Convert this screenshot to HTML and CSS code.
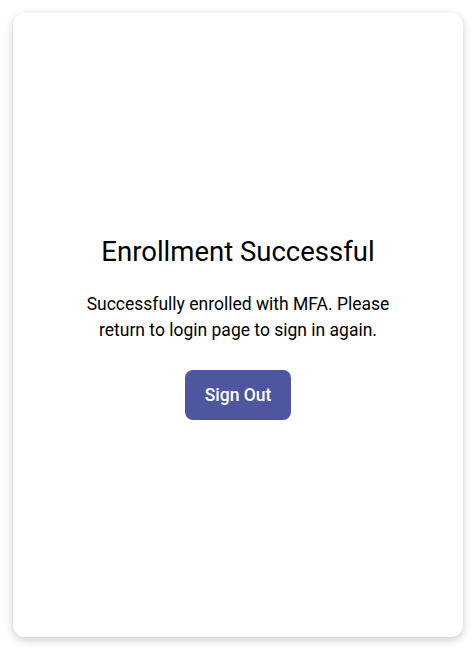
FILE: index.html
```html
<!DOCTYPE html>
<html lang="en">
<head>
<meta charset="utf-8">
<link rel="stylesheet" href="styles.css">
</head>
<body>
<main class="card">
  <h1 class="title">Enrollment Successful</h1>
  <p class="message">Successfully enrolled with MFA. Please<br>return to login page to sign in again.</p>
  <button class="btn" type="button">Sign Out</button>
</main>
</body>
</html>
```
FILE: styles.css
```css
html, body {
  margin: 0;
  padding: 0;
  background: #ffffff;
}
body {
  padding: 13px 12px 14px 13px;
  font-family: Roboto, "Liberation Sans", sans-serif;
  color: #000;
}
.card {
  box-sizing: border-box;
  width: 450px;
  height: 624px;
  background: #fff;
  border-radius: 12px;
  box-shadow: 0 3px 10px rgba(0,0,0,0.2);
  display: flex;
  flex-direction: column;
  align-items: center;
  justify-content: center;
  text-align: center;
  padding-top: 6px;
}
.title {
  margin: 0;
  font-size: 27.5px;
  font-weight: 400;
  line-height: 32px;
}
.message {
  margin: 23px 0 0;
  font-size: 17.5px;
  line-height: 26px;
}
.btn {
  margin-top: 27px;
  width: 106px;
  height: 50px;
  border: none;
  border-radius: 8px;
  background: #4f56a0;
  color: #fff;
  font-family: Roboto, "Liberation Sans", sans-serif;
  font-size: 17.5px;
  font-weight: 500;
}
```
